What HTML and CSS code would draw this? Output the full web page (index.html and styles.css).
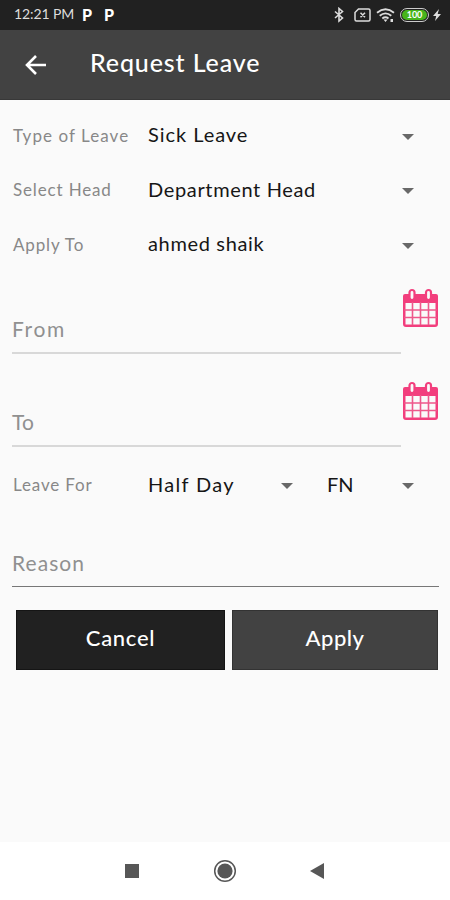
FILE: index.html
```
<!DOCTYPE html>
<html>
<head>
	<meta charset="utf-8">
	<title>Request Leave</title>
	<link rel="stylesheet" href="styles.css">
</head>
<body>
<div class="statusbar">
	<span class="time">12:21 PM</span>
	<b class="notice">P</b>
	<b class="notice">P</b>
	<div class="tray">
		<svg width="12" height="16" viewBox="0 0 12 16"><path d="M2 4.500l7.500 6.500L6 14V1.500l3.500 3L2 11" stroke-width="1.600"/></svg>
		<svg class="sim" width="17" height="14" viewBox="0 0 17 14"><path d="M4.500 1H14.500Q16 1 16 2.500V11.500Q16 13 14.500 13H2.500Q1 13 1 11.500V4.500zM6.500 4.700l4.500 4.600M11 4.700L6.500 9.300" stroke-width="1.500"/></svg>
		<svg class="wifi" width="19" height="15" viewBox="0 0 19 15"><path d="M1 4.700Q9.500-2.200 18 4.700M3.700 7.700Q9.500 3 15.300 7.700M6.300 10.500Q9.500 8 12.500 10.500" stroke-width="1.800"/><path class="solid" d="M7.500 11.500h4l-2 2.500zM14.500 11h2.500v3h-2.500z"/></svg>
		<span class="battery"><i>100</i></span>
		<svg class="bolt" width="8" height="14" viewBox="0 0 8 14"><path class="solid" d="M6 1L0 8h3.200L2 13l6-7H4.700z"/></svg>
	</div>
</div>
<div class="header">
	<svg class="back" width="22" height="22" viewBox="0 0 22 22"><path d="M21 11H2.500M11 2L2 11l9 9"/></svg>
	<h1>Request Leave</h1>
</div>
<div class="form">
	<div class="row">
		<label class="l-type">Type of Leave</label>
		<div class="select"><span class="v-type">Sick Leave</span><i class="caret"></i></div>
	</div>
	<div class="row">
		<label>Select Head</label>
		<div class="select"><span>Department Head</span><i class="caret"></i></div>
	</div>
	<div class="row">
		<label>Apply To</label>
		<div class="select"><span>ahmed shaik</span><i class="caret"></i></div>
	</div>
	<div class="date">
		<div class="input"><span class="p-from">From</span></div>
		<svg class="cal" width="38" height="40" viewBox="0 0 38 40">
			<path class="fill" d="M4 6H35Q37 6 37 8V36Q37 39 34 39H5Q2 39 2 36V8Q2 6 4 6zM4.500 15V36.500H34.500V15z" fill-rule="evenodd"/>
			<path class="grid" d="M11.500 14V37M19.500 14V37M27.500 14V37M3 22H36M3 29.500H36"/>
			<rect x="8.500" y="2" width="5" height="10" rx="2.500"/>
			<rect x="25" y="2" width="5" height="10" rx="2.500"/>
		</svg>
	</div>
	<div class="date">
		<div class="input"><span class="p-to">To</span></div>
		<svg class="cal" width="38" height="40" viewBox="0 0 38 40">
			<path class="fill" d="M4 6H35Q37 6 37 8V36Q37 39 34 39H5Q2 39 2 36V8Q2 6 4 6zM4.500 15V36.500H34.500V15z" fill-rule="evenodd"/>
			<path class="grid" d="M11.500 14V37M19.500 14V37M27.500 14V37M3 22H36M3 29.500H36"/>
			<rect x="8.500" y="2" width="5" height="10" rx="2.500"/>
			<rect x="25" y="2" width="5" height="10" rx="2.500"/>
		</svg>
	</div>
	<div class="row">
		<label>Leave For</label>
		<div class="select day"><span class="v-day">Half Day</span><i class="caret"></i></div>
		<div class="select"><span class="v-fn">FN</span><i class="caret"></i></div>
	</div>
	<div class="input reason"><span class="p-reason">Reason</span></div>
	<div class="buttons">
		<div class="btn">Cancel</div>
		<div class="btn apply">Apply</div>
	</div>
</div>
<div class="navbar">
	<svg width="16" height="16" viewBox="0 0 16 16"><path d="M1 1h14v14H1z"/></svg>
	<svg width="24" height="24" viewBox="0 0 24 24"><circle class="ring" cx="12" cy="12" r="10.300"/><circle cx="12" cy="12" r="7.600"/></svg>
	<svg width="16" height="18" viewBox="0 0 16 18"><path d="M15 1v16L1 9z"/></svg>
</div>
</body>
</html>
```
FILE: styles.css
```
*{box-sizing:border-box;}
body,h1{margin:0;padding:0;}
body{display:flex;flex-direction:column;height:900px;background:#fafafa;font-family:Lato,"Open Sans",sans-serif;color:#161616;overflow:hidden;}
svg{display:block;flex:none;}
i{font-style:normal;}

.statusbar{display:flex;align-items:center;height:30px;padding:0 9px 0 14px;background:#212121;color:#ddd;}
.time{width:68px;font-size:14px;line-height:26px;padding-bottom:3px;white-space:nowrap;letter-spacing:-.1px;}
.notice{width:22px;font:900 16px/20px Lato,sans-serif;color:#fff;}
.tray{display:flex;align-items:center;margin-left:auto;}
.tray path{fill:none;stroke:#ddd;}
.tray .solid{fill:#ddd;stroke:none;}
.sim{margin-left:9px;}
.wifi{margin-left:5px;}
.battery{display:flex;width:29px;height:14px;margin-left:5px;padding:1px;border:1.5px solid #ccc;border-radius:7px;}
.battery i{flex:1;border-radius:5px;background:#47b51c;color:#fff;font-size:9px;font-weight:700;line-height:9px;text-align:center;}
.bolt{margin-left:4px;}

.header{display:flex;align-items:center;height:70px;padding-left:25px;background:#424242;border-bottom:1px solid #383838;}
.back{fill:none;stroke:#fff;stroke-width:2.6;}
.header h1{margin:-5px 0 0 43px;color:#fff;font-size:25px;font-weight:500;line-height:32px;letter-spacing:.88px;}

.form{flex:1;padding:8px 11px 0 12px;}
.row{display:flex;align-items:center;height:54.5px;}
.row label{width:136px;padding-left:1px;color:#888;font-size:17px;letter-spacing:.85px;}
.row .l-type{letter-spacing:1.05px;}
.select{display:flex;flex:1;align-items:center;justify-content:space-between;padding-right:25px;font-size:20px;letter-spacing:.65px;white-space:nowrap;}
.select span{margin-top:-2px;}
.select .v-type{letter-spacing:.95px;}
.select .v-day{letter-spacing:1.3px;}
.select .v-fn{letter-spacing:0;}
.select.day{flex:none;width:179px;padding-right:34px;}
.caret{border:6px solid transparent;border-top-color:#686868;border-bottom:0;margin-top:3px;}
.date{display:flex;align-items:flex-start;height:93px;padding-top:15px;}
.input{flex:1;height:67px;padding-top:28px;border-bottom:2px solid #d8d8d8;color:#909090;font-size:21px;line-height:28px;}
.p-from{letter-spacing:1.6px;}
.p-to{letter-spacing:.2px;}
.p-reason{letter-spacing:1.05px;}
.cal{margin-top:1px;}
.cal .fill{fill:#f23e7d;}
.cal .grid{fill:none;stroke:#ee588b;stroke-width:1.6;}
.cal rect{fill:#fafafa;stroke:#f23e7d;stroke-width:2.2;}
.reason{height:75px;padding-top:37px;border-bottom:1px solid #777;}
.buttons{display:flex;gap:7px;padding:23px 1px 0 4px;}
.btn{display:flex;align-items:center;justify-content:center;width:209px;height:60px;padding-bottom:6px;background:#212121;border:1px solid #151515;color:#fff;font-size:22px;font-weight:500;letter-spacing:.7px;}
.btn.apply{width:206px;background:#424242;border-color:#333;letter-spacing:.5px;}

.navbar{display:flex;align-items:center;justify-content:space-between;height:58px;padding:0 125px 0 124px;background:#fff;}
.navbar svg{fill:#575757;}
.navbar .ring{fill:none;stroke:#575757;stroke-width:1.5;}
```
